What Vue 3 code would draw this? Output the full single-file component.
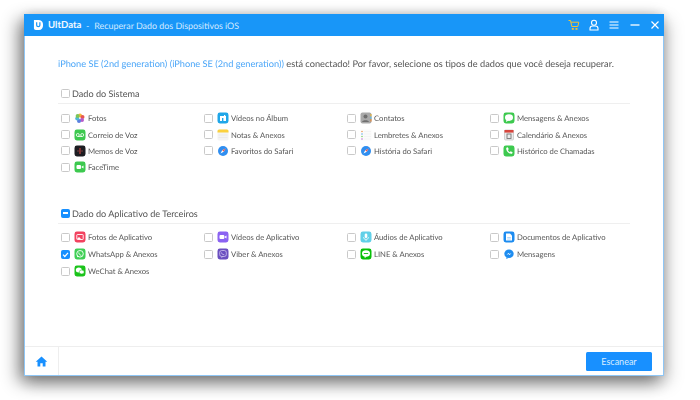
<script setup>
const icons = {
  fotos: '<circle cx="6" cy="3.4" r="2" fill="#f6b73c"/><circle cx="8.5" cy="5" r="2" fill="#e8574f"/><circle cx="8" cy="8" r="2" fill="#b55cc9"/><circle cx="5" cy="9" r="2" fill="#5a7fe0"/><circle cx="3.2" cy="6.6" r="2" fill="#4fb8d6"/><circle cx="3.6" cy="4" r="2" fill="#7cc65a"/>',
  videos: '<rect x=".5" y=".5" width="11" height="11" rx="2.4" fill="#1fa6e8"/><rect x="3" y="4" width="6" height="5" fill="#fff"/><rect x="5" y="6" width="1.4" height="3" fill="#1fa6e8"/><rect x="7" y="3" width="1.2" height="2" fill="#fff"/>',
  contatos: '<rect x=".5" y=".5" width="11" height="11" rx="2" fill="#a9a9a9"/><circle cx="5.5" cy="4.6" r="2" fill="#6f6f6f"/><path d="M2 10c.4-2.4 6.600-2.400 7 0z" fill="#6f6f6f"/><rect x="10.300" y="2" width="1.200" height="2.500" fill="#e9b33a"/><rect x="10.300" y="4.500" width="1.200" height="2.500" fill="#5cb8e6"/><rect x="10.300" y="7" width="1.200" height="2.500" fill="#e8893a"/>',
  mensagens: '<rect x=".5" y=".5" width="11" height="11" rx="2.400" fill="#3dc94f"/><ellipse cx="6" cy="5.600" rx="4" ry="3.300" fill="#fff"/><path d="M3.500 7.500L3 10l2.500-1.500z" fill="#fff"/>',
  correio: '<rect x=".5" y=".5" width="11" height="11" rx="2.400" fill="#3dc94f"/><circle cx="3.800" cy="6" r="1.500" fill="none" stroke="#fff" stroke-width=".8"/><circle cx="8.200" cy="6" r="1.500" fill="none" stroke="#fff" stroke-width=".8"/><path d="M3.800 7.500h4.400" stroke="#fff" stroke-width=".8"/>',
  notas: '<rect x=".5" y=".5" width="11" height="11" rx="1.500" fill="#f4f4f4"/><path d="M.5 2a1.500 1.500 0 0 1 1.500-1.500h8a1.500 1.500 0 0 1 1.500 1.500v1.500h-11z" fill="#fbd13e"/><path d="M1.500 6h9M1.500 8.500h9" stroke="#e2e2e2" stroke-width=".5"/>',
  lembretes: '<rect x=".5" y=".5" width="11" height="11" fill="#fbfbfb"/><circle cx="2" cy="2.500" r=".7" fill="#e8893a"/><circle cx="2" cy="5" r=".7" fill="#4f9ce8"/><circle cx="2" cy="7.500" r=".7" fill="#6ac65a"/><circle cx="2" cy="10" r=".7" fill="#b55cc9"/><path d="M4 2.500h7M4 5h7M4 7.500h7M4 10h7" stroke="#ececec" stroke-width=".5"/>',
  calendario: '<rect x="1.500" y="1" width="9" height="10" rx="1" fill="#ececec" stroke="#aaa" stroke-width=".5"/><rect x="1.500" y="1" width="9" height="2.600" fill="#d8453c"/><rect x="4" y="5" width="4" height="4.500" fill="none" stroke="#777" stroke-width=".9"/>',
  memos: '<rect x=".5" y=".5" width="11" height="11" rx="2.400" fill="#1d1d22"/><path d="M6 3v6" stroke="#e2403a" stroke-width="1"/><path d="M3 6h6" stroke="#7a3a3a" stroke-width="1"/>',
  safari: '<circle cx="6" cy="6" r="5" fill="#2f8ef0"/><path d="M8.500 3.500L6.800 6.800 3.500 8.500 5.200 5.200z" fill="#fff"/><path d="M8.500 3.500L6.800 6.800 5.200 5.200z" fill="#e8574f"/>',
  chamadas: '<rect x=".5" y=".5" width="11" height="11" rx="2.400" fill="#3dc94f"/><path d="M3.300 2.800l1.500-.5 1 2-1 .8c.4 1 1.100 1.700 2 2.100l.8-1 2 1-.5 1.500c-3 .8-6.600-2.900-5.800-5.900z" fill="#fff"/>',
  facetime: '<rect x=".5" y=".5" width="11" height="11" rx="2.400" fill="#3dc94f"/><rect x="2.500" y="4" width="4.500" height="4" rx="1" fill="#fff"/><path d="M7.500 5.700l2-1.300v3.200l-2-1.300z" fill="#fff"/>',
  fotosapp: '<rect x=".5" y=".5" width="11" height="11" rx="2.400" fill="#f2425f"/><rect x="2.800" y="3.500" width="6.400" height="5" rx=".6" fill="none" stroke="#fff" stroke-width=".9"/><path d="M3 8l2-2 2 2z" fill="#fff"/>',
  videosapp: '<rect x=".5" y=".5" width="11" height="11" rx="2.400" fill="#8b63f2"/><rect x="2.500" y="4" width="4.800" height="4" rx="1" fill="#fff"/><path d="M7.500 5.700l2-1.300v3.200l-2-1.300z" fill="#fff"/>',
  audios: '<rect x=".5" y=".5" width="11" height="11" rx="2.400" fill="#62d0e8"/><rect x="4.700" y="2.500" width="2.600" height="4.500" rx="1.300" fill="#fff"/><path d="M3.500 6a2.500 2.500 0 0 0 5 0M6 8.500V10" stroke="#fff" stroke-width=".7" fill="none"/>',
  documentos: '<rect x=".5" y=".5" width="11" height="11" rx="2.400" fill="#1d8cf0"/><path d="M3 2.500h4l2 2v5H3z" fill="#fff"/><path d="M4.200 6.500h3.600M4.200 8h3.600" stroke="#7dbcf5" stroke-width=".6"/>',
  whatsapp: '<rect x=".5" y=".5" width="11" height="11" rx="2.400" fill="#3fcf55"/><circle cx="6" cy="5.800" r="3.300" fill="none" stroke="#fff" stroke-width=".9"/><path d="M3 9.300l.6-2 1.300 1.400z" fill="#fff"/><path d="M4.800 4.500c0 1.500 1.200 2.700 2.500 2.800" stroke="#fff" stroke-width=".9" fill="none"/>',
  viber: '<rect x=".5" y=".5" width="11" height="11" rx="2.400" fill="#6a4fc0"/><rect x="2.700" y="2.500" width="6.600" height="6" rx="2" fill="none" stroke="#cfc4ef" stroke-width=".8"/><path d="M4.500 4.500c0 1.200.8 2 2.800 2.300" stroke="#cfc4ef" stroke-width=".8" fill="none"/><path d="M4.500 8.500v1.700L6 8.500z" fill="#cfc4ef"/>',
  line: '<rect x=".5" y=".5" width="11" height="11" rx="2.400" fill="#08c008"/><ellipse cx="6" cy="5.500" rx="4" ry="3.200" fill="#fff"/><path d="M4.500 8l.3 2 2-1.500z" fill="#fff"/><path d="M3.800 5.500h4.400" stroke="#08c008" stroke-width=".9"/>',
  messenger: '<ellipse cx="6" cy="5.700" rx="4.700" ry="4.300" fill="#1d8cf0"/><path d="M3.500 9l-.2 2 2-1z" fill="#1d8cf0"/><path d="M3.500 7l1.800-2 1.400 1.100 1.800-1.100-1.800 2-1.400-1.100z" fill="#fff"/>',
  wechat: '<rect x=".5" y=".5" width="11" height="11" rx="2.400" fill="#1bc31b"/><ellipse cx="4.800" cy="5" rx="3" ry="2.500" fill="#fff"/><ellipse cx="7.700" cy="7" rx="2.500" ry="2" fill="#fff" stroke="#1bc31b" stroke-width=".5"/>'
}

const system = [
  ['Fotos', 'fotos'], ['Vídeos no Álbum', 'videos'], ['Contatos', 'contatos'], ['Mensagens & Anexos', 'mensagens'],
  ['Correio de Voz', 'correio'], ['Notas & Anexos', 'notas'], ['Lembretes & Anexos', 'lembretes'], ['Calendário & Anexos', 'calendario'],
  ['Memos de Voz', 'memos'], ['Favoritos do Safari', 'safari'], ['História do Safari', 'safari'], ['Histórico de Chamadas', 'chamadas'],
  ['FaceTime', 'facetime']
]
const third = [
  ['Fotos de Aplicativo', 'fotosapp'], ['Vídeos de Aplicativo', 'videosapp'], ['Áudios de Aplicativo', 'audios'], ['Documentos de Aplicativo', 'documentos'],
  ['WhatsApp & Anexos', 'whatsapp', true], ['Viber & Anexos', 'viber'], ['LINE & Anexos', 'line'], ['Mensagens', 'messenger'],
  ['WeChat & Anexos', 'wechat']
]
const sections = [
  { title: 'Dado do Sistema', items: system, cls: 'sys' },
  { title: 'Dado do Aplicativo de Terceiros', items: third, cls: 'third', partial: true }
]
</script>

<template>
  <div class="page">
    <div class="win">
      <header class="bar">
        <svg class="logo" viewBox="0 0 12 13"><path d="M1 1h5.500C9.500 1 11 3.500 11 6.500S9.500 12 6.500 12H3a2 2 0 0 1-2-2z" fill="#fff"/><path d="M4 3.500v3.200c0 2 3.500 2 3.500 0V3.500" fill="none" stroke="#1896f8" stroke-width="1.300"/></svg>
        <span class="brand">UltData</span>
        <span class="sep">-</span>
        <span class="sub">Recuperar Dado dos Dispositivos iOS</span>
        <div class="tools">
          <svg viewBox="0 0 12 12" class="t"><path d="M.5 1.500h2l1.300 6h6l1-4.300H3" fill="none" stroke="#f5c12e" stroke-width="1"/><rect x="3.800" y="9" width="2" height="1.800" fill="#f5c12e"/><rect x="7.500" y="9" width="2" height="1.800" fill="#f5c12e"/></svg>
          <svg viewBox="0 0 12 12" class="t"><circle cx="6" cy="3.700" r="2.500" fill="none" stroke="#fff" stroke-width="1.100"/><path d="M2 11V9.500c0-1.500 1-2.500 2.500-2.500h3C9 7 10 8 10 9.500V11z" fill="none" stroke="#fff" stroke-width="1.100"/></svg>
          <svg viewBox="0 0 12 12" class="t"><path d="M1.500 3h9M1.500 6h9M1.500 9h9" stroke="#fff" stroke-width="1.200"/></svg>
          <svg viewBox="0 0 12 12" class="t"><path d="M1.500 6h9" stroke="#fff" stroke-width="1.300"/></svg>
          <svg viewBox="0 0 12 12" class="t"><path d="M2.500 2.500l7 7M9.500 2.500l-7 7" stroke="#fff" stroke-width="1.200"/></svg>
        </div>
      </header>

      <main class="body">
        <p class="intro"><span class="dev">iPhone SE (2nd generation) (iPhone SE (2nd generation))</span> está conectado! Por favor, selecione os tipos de dados que você deseja recuperar.</p>

        <section v-for="s in sections" :key="s.title" class="sec" :class="s.cls">
          <div class="head">
            <span class="box" :class="{ on: s.partial }"><i v-if="s.partial" class="dash"></i></span>
            <span>{{ s.title }}</span>
          </div>
          <div class="grid">
            <div v-for="it in s.items" :key="it[0]" class="item">
              <span class="box" :class="{ on: it[2] }">
                <svg v-if="it[2]" viewBox="0 0 9 9" class="tick"><path d="M2 4.700l1.800 1.800L7 2.800" fill="none" stroke="#fff" stroke-width="1.200"/></svg>
              </span>
              <svg class="ic" viewBox="0 0 12 12" v-html="icons[it[1]]"></svg>
              <span class="lab">{{ it[0] }}</span>
            </div>
          </div>
        </section>
      </main>

      <footer class="foot">
        <div class="home">
          <svg viewBox="0 0 14 14" width="13" height="13"><path d="M7 1.500L.8 7.200h1.900V12.500h3V9h2.600v3.500h3V7.200h1.900z" fill="#1890ff"/></svg>
        </div>
        <button class="scan">Escanear</button>
      </footer>
    </div>
  </div>
</template>

<style scoped>
.page { padding: 14px 36px 24px 24px; font-family: Lato, Roboto, sans-serif; color: #555; text-rendering: geometricPrecision; }
.win {
  width: 640px; height: 362px; box-sizing: border-box; background: #fff;
  display: flex; flex-direction: column;
  border: 1px solid #8fc6f5; border-top: 0;
  filter: blur(.35px);
  box-shadow: -6px 6px 16px rgba(0,0,0,.45), 4px 7px 16px rgba(0,0,0,.22), 0 -2px 10px rgba(0,0,0,.08);
}
.bar { height: 22px; margin: 0 -1px; background: #1896f8; display: flex; align-items: center; padding-left: 9px; color: #fff; flex: none; }
.logo { width: 11px; height: 12px; margin-right: 4px; }
.brand { font-size: 9.600px; font-weight: 700; color: #f2f8ff; }
.sep { font-size: 9px; margin: 0 5px 0 4.500px; color: #d4eaff; }
.sub { font-size: 8.900px; color: #d4eaff; }
.tools { margin-left: auto; display: flex; gap: 8.300px; margin-right: 3px; }
.t { width: 12px; height: 12px; }
.body { flex: 1; padding: 0 33px 0 33px; min-height: 0; }
.intro { margin: 21px 0 0; font-size: 9.220px; line-height: 14px; color: #555; white-space: nowrap; }
.dev { color: #4ba6f8; }
.sec { margin-top: 15px; }
.sec.third { margin-top: 30px; }
.head { display: flex; align-items: center; gap: 2px; padding: 0 0 2px 3px; height: 15px; font-size: 9.100px; border-bottom: 1px solid #efefef; }
.grid { display: grid; grid-template-columns: repeat(4, 143px); }
.sys .grid { grid-auto-rows: 16.400px; padding-top: 6px; }
.third .grid { grid-auto-rows: 17px; padding-top: 5px; }
.item { display: flex; align-items: center; padding-left: 3px; font-size: 7.680px; }
.box { width: 9px; height: 9px; box-sizing: border-box; border: 1px solid #c9c9c9; border-radius: 1.500px; background: #fff; display: inline-flex; align-items: center; justify-content: center; flex: none; }
.box.on { background: #1890ff; border-color: #1890ff; }
.dash { width: 5px; height: 1.300px; background: #fff; }
.tick { width: 9px; height: 9px; flex: none; }
.ic { width: 12px; height: 12px; margin: 0 2px 0 4px; flex: none; }
.lab { white-space: nowrap; }
.foot { height: 28px; flex: none; border-top: 1px solid #eee; display: flex; align-items: stretch; justify-content: space-between; }
.home { width: 33px; border-right: 1px solid #eee; display: flex; align-items: center; justify-content: center; }
.scan { align-self: center; width: 66px; height: 19px; margin-right: 11px; border: 0; border-radius: 1.500px; background: #1890ff; color: #d9edff; font: 9px Lato, sans-serif; padding: 0; }
</style>
